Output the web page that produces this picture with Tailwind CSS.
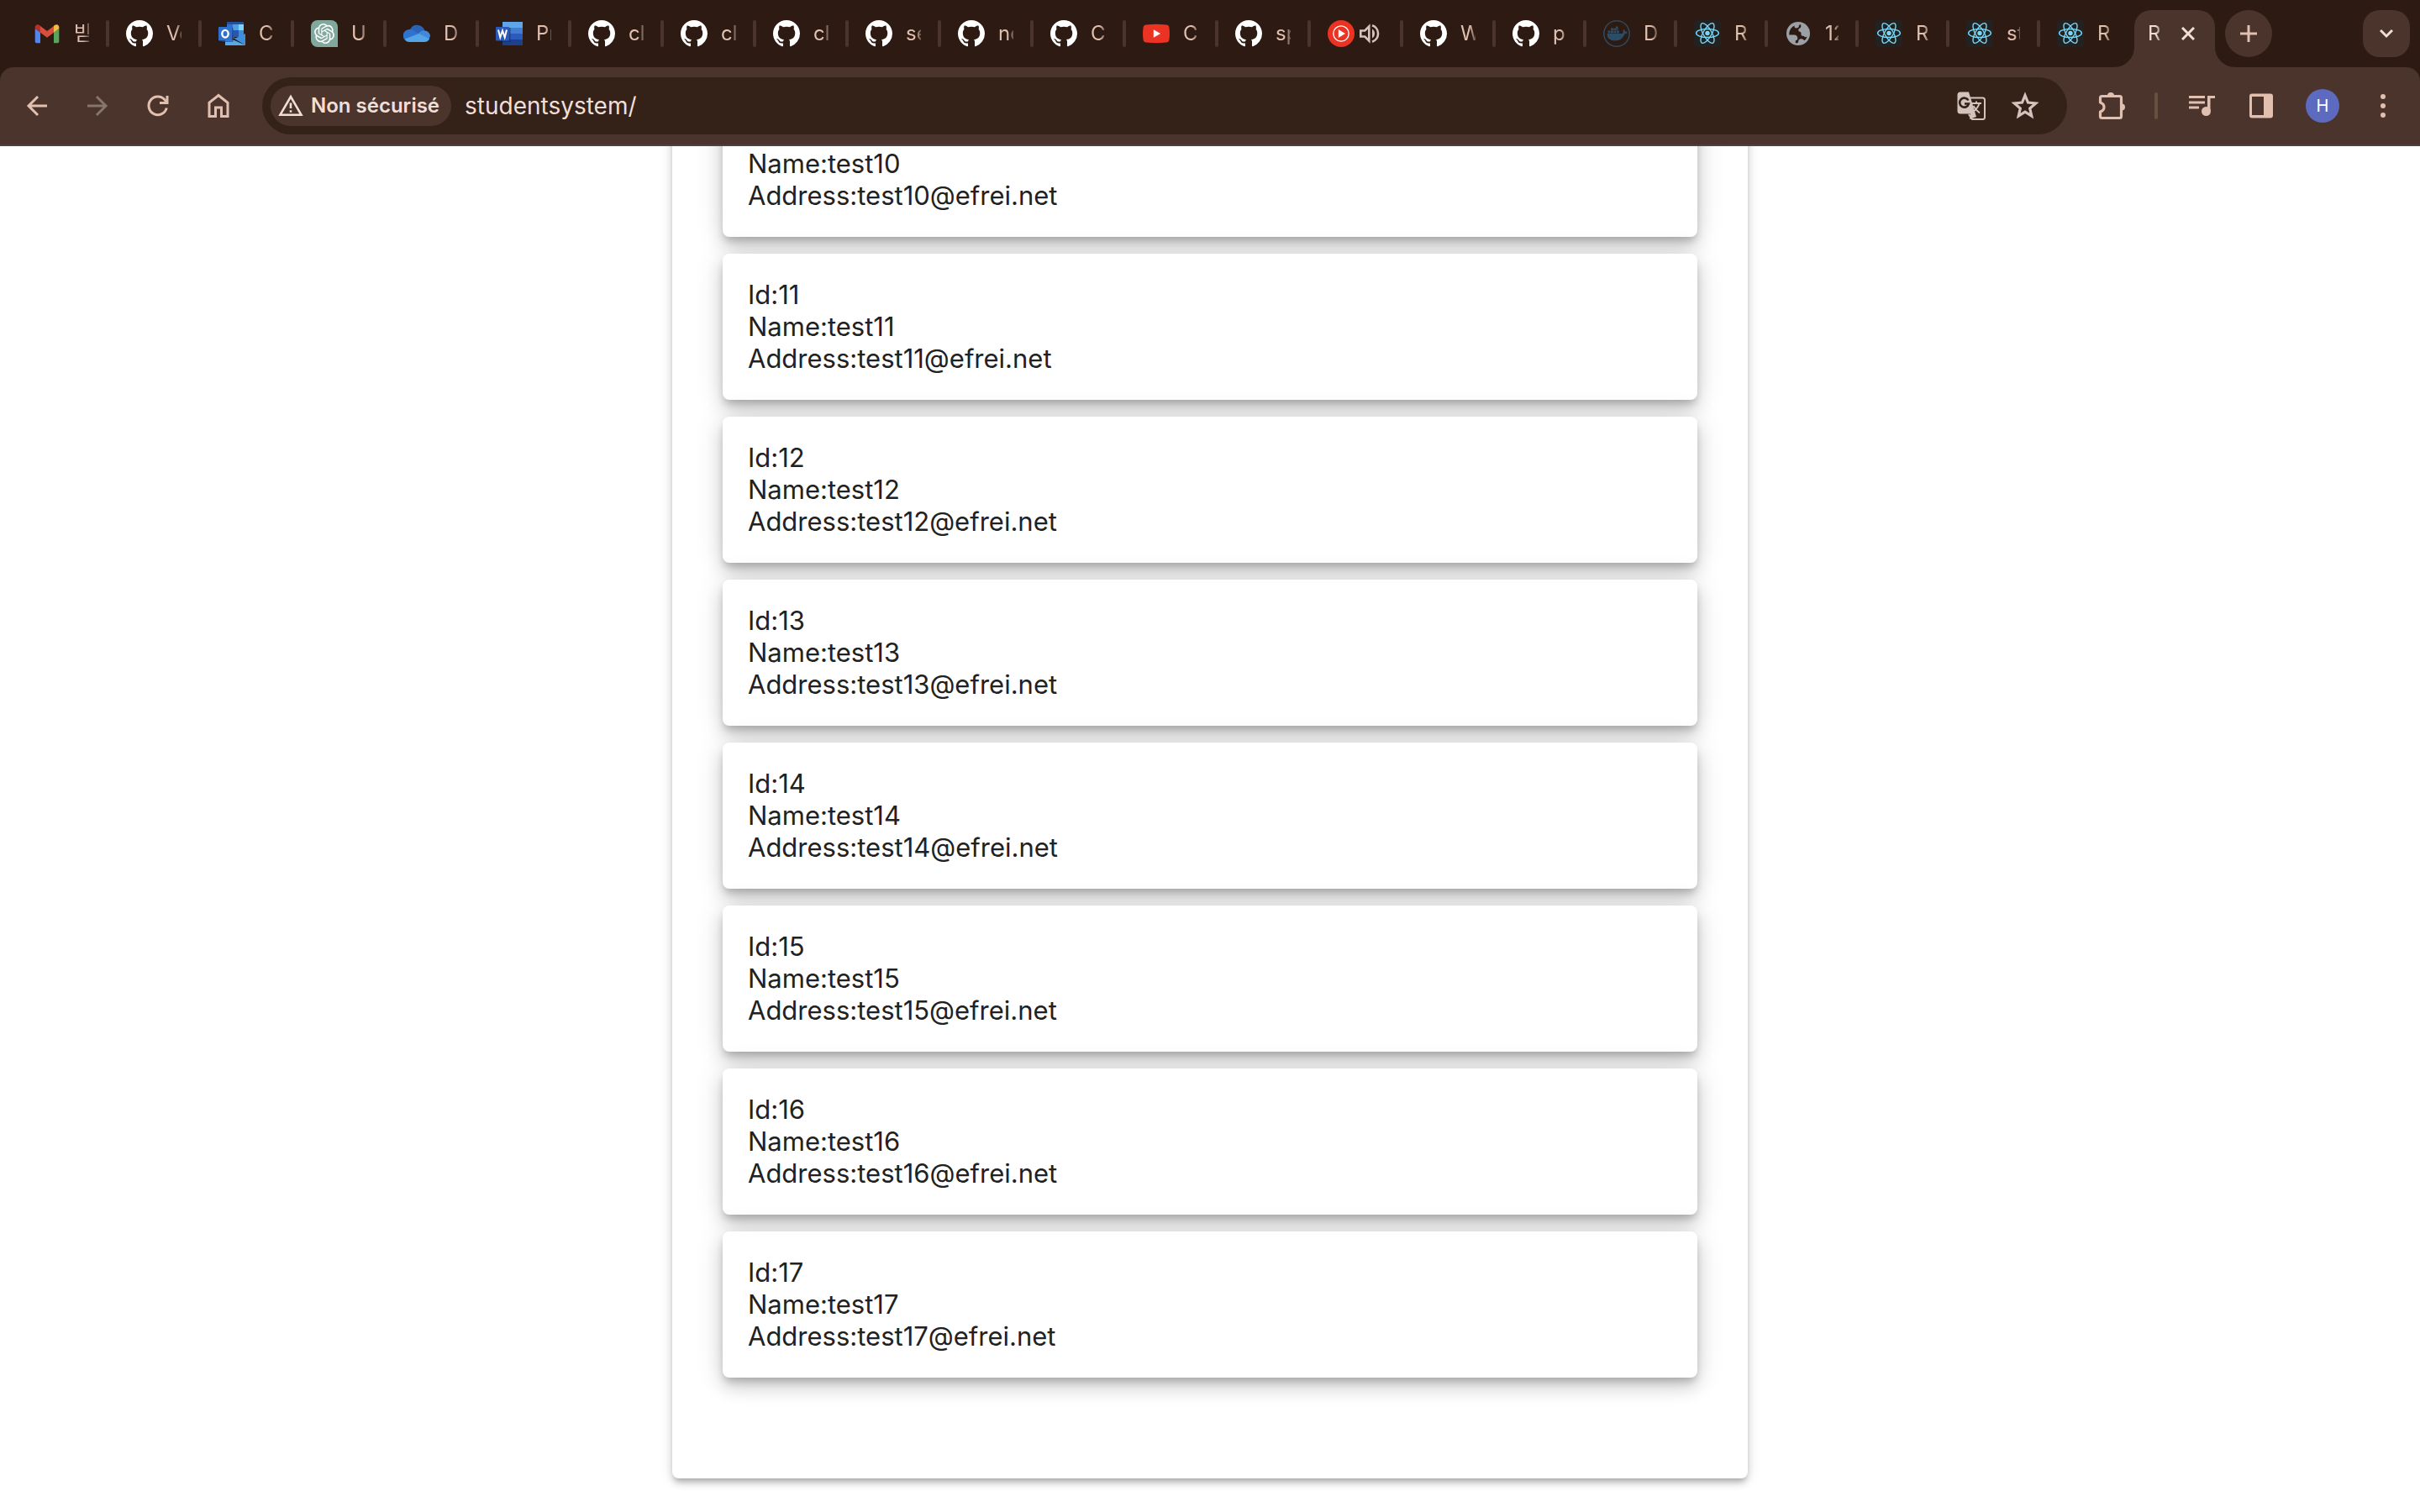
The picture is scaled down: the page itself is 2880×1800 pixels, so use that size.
<!DOCTYPE html>
<html lang="fr">
<head>
<meta charset="utf-8">
<title>React App</title>
<script src="https://cdn.jsdelivr.net/npm/@tailwindcss/browser@4"></script>
</head>
<body class="flex h-screen flex-col overflow-hidden bg-white font-['Inter','Noto_Sans_CJK_KR',sans-serif]">

<svg class="hidden" aria-hidden="true">
  <symbol id="github" viewBox="0 0 16 16"><path fill="#fff" d="M8 0C3.58 0 0 3.58 0 8c0 3.54 2.29 6.53 5.47 7.59.4.07.55-.17.55-.38 0-.19-.01-.82-.01-1.49-2.01.37-2.53-.49-2.69-.94-.09-.23-.48-.94-.82-1.13-.28-.15-.68-.52-.01-.53.63-.01 1.08.58 1.23.82.72 1.21 1.87.87 2.33.66.07-.52.28-.87.51-1.07-1.78-.2-3.64-.89-3.64-3.95 0-.87.31-1.59.82-2.15-.08-.2-.36-1.02.08-2.12 0 0 .67-.21 2.2.82.64-.18 1.32-.27 2-.27.68 0 1.36.09 2 .27 1.53-1.04 2.2-.82 2.2-.82.44 1.1.16 1.92.08 2.12.51.56.82 1.27.82 2.15 0 3.07-1.87 3.75-3.65 3.95.29.25.54.73.54 1.48 0 1.07-.01 1.93-.01 2.2 0 .21.15.46.55.38A8.013 8.013 0 0016 8c0-4.42-3.58-8-8-8z"/></symbol>
  <symbol id="react" viewBox="0 0 32 32"><rect width="32" height="32" rx="3" fill="#222222"/><g fill="none" stroke="#7ad7f5" stroke-width="1.400"><ellipse cx="16" cy="15.500" rx="13.400" ry="5"/><ellipse cx="16" cy="15.500" rx="13.400" ry="5" transform="rotate(60 16 15.500)"/><ellipse cx="16" cy="15.500" rx="13.400" ry="5" transform="rotate(120 16 15.500)"/></g><circle cx="16" cy="15.500" r="2.700" fill="#7ad7f5"/></symbol>
</svg>

<header class="shrink-0 bg-[#2d1b13]">
  <div class="flex h-20 pl-5 pr-3 text-2xl leading-8 text-[#e2c0b0]" role="tablist">
    <button role="tab" aria-label="Gmail" class="flex w-[110px] min-w-0 items-center gap-4 pl-5">
      <svg class="size-8 shrink-0" viewBox="0 0 32 32"><path fill="#5286ec" d="M1.700 10v15.500q0 1.700 1.700 1.700H8V14.500z"/><path fill="#58a55c" d="M30.300 10v15.500q0 1.700-1.700 1.700H24V14.500z"/><path fill="#d94f3d" d="M8 14.700V7l8 6 8-6v7.700l-8 6z"/><path fill="#b5322a" d="M1.700 10V8.500C1.700 5.500 4.500 4.200 7 6l1 .8v7.900z"/><path fill="#f2bd42" d="M30.300 10V8.500c0-3-2.800-4.300-5.300-2.500l-1 .8v7.900z"/></svg>
      <span class="w-[18px] shrink-0 overflow-hidden whitespace-nowrap text-left mask-r-from-60% mask-r-to-120%">받</span>
      <i class="ml-auto h-8 w-1 rounded-sm bg-[#4b342b]"></i>
    </button>
    <button role="tab" aria-label="GitHub V" class="flex w-[110px] min-w-0 items-center gap-4 pl-5">
      <svg class="size-8 shrink-0"><use href="#github"/></svg>
      <span class="w-[18px] shrink-0 overflow-hidden whitespace-nowrap text-left mask-r-from-60% mask-r-to-120%">Ve</span>
      <i class="ml-auto h-8 w-1 rounded-sm bg-[#4b342b]"></i>
    </button>
    <button role="tab" aria-label="Outlook" class="flex w-[110px] min-w-0 items-center gap-4 pl-5">
      <svg class="size-8 shrink-0" viewBox="0 0 32 32"><path fill="#234f9b" d="M10 2h20v4H10z"/><path fill="#2f6fd0" d="M10 5h7v14h-7z"/><path fill="#4da0e0" d="M17 5h7v7h-7z"/><path fill="#79d5fb" d="M24 5h6v7h-6z"/><path fill="#2757b0" d="M17 12h7v8h-7z"/><path fill="#3f8cdb" d="M24 12h6v8h-6z"/><path fill="#2c62b4" d="M8 16v6h14z"/><path fill="#55a8e8" d="M8 20l24 10H8z"/><path fill="#3f90dc" d="M32 16v14L19 22z"/><path fill="#57aaea" d="M8 30V21l11 3 13 6z"/><path fill="#1d3f78" fill-opacity=".6" d="M16 9h1.500v17H4v-1.500h12z"/><rect y="8" width="16" height="16.500" rx="1" fill="#2f6fce"/><ellipse cx="8" cy="16.200" rx="3.700" ry="4.300" fill="none" stroke="#fff" stroke-width="2.400"/></svg>
      <span class="w-[18px] shrink-0 overflow-hidden whitespace-nowrap text-left mask-r-from-60% mask-r-to-120%">C</span>
      <i class="ml-auto h-8 w-1 rounded-sm bg-[#4b342b]"></i>
    </button>
    <button role="tab" aria-label="ChatGPT" class="flex w-[110px] min-w-0 items-center gap-4 pl-5">
      <svg class="size-8 shrink-0" viewBox="0 0 32 32"><path fill="#80a89d" d="M8 0h16a8 8 0 018 8v24H8a8 8 0 01-8-8V8a8 8 0 018-8z"/><path transform="translate(4 4)" fill="#fff" d="M22.2819 9.8211a5.9847 5.9847 0 0 0-.5157-4.9108 6.0462 6.0462 0 0 0-6.5098-2.9A6.0651 6.0651 0 0 0 4.9807 4.1818a5.9847 5.9847 0 0 0-3.9977 2.9 6.0462 6.0462 0 0 0 .7427 7.0966 5.98 5.98 0 0 0 .511 4.9107 6.051 6.051 0 0 0 6.5146 2.9001A5.9847 5.9847 0 0 0 13.2599 24a6.0557 6.0557 0 0 0 5.7718-4.2058 5.9894 5.9894 0 0 0 3.9977-2.9001 6.0557 6.0557 0 0 0-.7475-7.0729zm-9.022 12.6081a4.4755 4.4755 0 0 1-2.8764-1.0408l.1419-.0804 4.7783-2.7582a.7948.7948 0 0 0 .3927-.6813v-6.7369l2.02 1.1686a.071.071 0 0 1 .038.052v5.5826a4.504 4.504 0 0 1-4.4945 4.4944zm-9.6607-4.1254a4.4708 4.4708 0 0 1-.5346-3.0137l.142.0852 4.783 2.7582a.7712.7712 0 0 0 .7806 0l5.8428-3.3685v2.3324a.0804.0804 0 0 1-.0332.0615L9.74 19.9502a4.4992 4.4992 0 0 1-6.1408-1.6464zM2.3408 7.8956a4.485 4.485 0 0 1 2.3655-1.9728V11.6a.7664.7664 0 0 0 .3879.6765l5.8144 3.3543-2.0201 1.1685a.0757.0757 0 0 1-.071 0l-4.8303-2.7865A4.504 4.504 0 0 1 2.3408 7.872zm16.5963 3.8558L13.1038 8.364 15.1192 7.2a.0757.0757 0 0 1 .071 0l4.8303 2.7913a4.4944 4.4944 0 0 1-.6765 8.1042v-5.6772a.79.79 0 0 0-.407-.667zm2.0107-3.0231l-.142-.0852-4.7735-2.7818a.7759.7759 0 0 0-.7854 0L9.409 9.2297V6.8974a.0662.0662 0 0 1 .0284-.0615l4.8303-2.7866a4.4992 4.4992 0 0 1 6.6802 4.66zM8.3065 12.863l-2.02-1.1638a.0804.0804 0 0 1-.038-.0567V6.0742a4.4992 4.4992 0 0 1 7.3757-3.4537l-.142.0805L8.704 5.459a.7948.7948 0 0 0-.3927.6813zm1.0976-2.3654l2.602-1.4998 2.6069 1.4998v2.9994l-2.5974 1.4997-2.6067-1.4997Z"/></svg>
      <span class="w-[18px] shrink-0 overflow-hidden whitespace-nowrap text-left mask-r-from-60% mask-r-to-120%">U</span>
      <i class="ml-auto h-8 w-1 rounded-sm bg-[#4b342b]"></i>
    </button>
    <button role="tab" aria-label="OneDrive" class="flex w-[110px] min-w-0 items-center gap-4 pl-5">
      <svg class="size-8 shrink-0" viewBox="0 0 32 32"><path fill="#2a63b5" d="M8 11a9.500 9.500 0 0117.500 1.500L19 18 8 14z"/><path fill="#2f73cf" d="M7.500 26A7.500 7.500 0 117 11q3-.3 6 1.500l8 5L4 25z"/><path fill="#4089d8" d="M18 16q3-4 7.500-3.600A7 7 0 0132 19l-2 5-12-7z"/><path fill="#54a5e8" d="M1.700 22.500L18.500 16 31 22.300Q29.500 26 25.500 26h-18q-3.700 0-5.800-3.500z"/></svg>
      <span class="w-[18px] shrink-0 overflow-hidden whitespace-nowrap text-left mask-r-from-60% mask-r-to-120%">D</span>
      <i class="ml-auto h-8 w-1 rounded-sm bg-[#4b342b]"></i>
    </button>
    <button role="tab" aria-label="Word" class="flex w-[110px] min-w-0 items-center gap-4 pl-5">
      <svg class="size-8 shrink-0" viewBox="0 0 32 32"><path fill="#5fa5ea" d="M8 2h24v7H8z"/><path fill="#437dd1" d="M8 9h24v7H8z"/><path fill="#2d5bbb" d="M8 16h24v7H8z"/><path fill="#1e3f8b" d="M8 23h24v7H8z"/><path fill="#122c66" fill-opacity=".6" d="M16 9h1.500v17H8v-1.500h8z"/><rect y="8" width="16" height="16.500" rx="1" fill="#2a59b8"/><path fill="none" stroke="#fff" stroke-width="2" d="M3 11.500l2.300 9L8 12.500l2.700 8 2.300-9"/></svg>
      <span class="w-[18px] shrink-0 overflow-hidden whitespace-nowrap text-left mask-r-from-60% mask-r-to-120%">Pr</span>
      <i class="ml-auto h-8 w-1 rounded-sm bg-[#4b342b]"></i>
    </button>
    <button role="tab" aria-label="GitHub cl" class="flex w-[110px] min-w-0 items-center gap-4 pl-5">
      <svg class="size-8 shrink-0"><use href="#github"/></svg>
      <span class="w-[18px] shrink-0 overflow-hidden whitespace-nowrap text-left mask-r-from-60% mask-r-to-120%">cl</span>
      <i class="ml-auto h-8 w-1 rounded-sm bg-[#4b342b]"></i>
    </button>
    <button role="tab" aria-label="GitHub cl" class="flex w-[110px] min-w-0 items-center gap-4 pl-5">
      <svg class="size-8 shrink-0"><use href="#github"/></svg>
      <span class="w-[18px] shrink-0 overflow-hidden whitespace-nowrap text-left mask-r-from-60% mask-r-to-120%">cl</span>
      <i class="ml-auto h-8 w-1 rounded-sm bg-[#4b342b]"></i>
    </button>
    <button role="tab" aria-label="GitHub cl" class="flex w-[110px] min-w-0 items-center gap-4 pl-5">
      <svg class="size-8 shrink-0"><use href="#github"/></svg>
      <span class="w-[18px] shrink-0 overflow-hidden whitespace-nowrap text-left mask-r-from-60% mask-r-to-120%">cl</span>
      <i class="ml-auto h-8 w-1 rounded-sm bg-[#4b342b]"></i>
    </button>
    <button role="tab" aria-label="GitHub se" class="flex w-[110px] min-w-0 items-center gap-4 pl-5">
      <svg class="size-8 shrink-0"><use href="#github"/></svg>
      <span class="w-[18px] shrink-0 overflow-hidden whitespace-nowrap text-left mask-r-from-60% mask-r-to-120%">se</span>
      <i class="ml-auto h-8 w-1 rounded-sm bg-[#4b342b]"></i>
    </button>
    <button role="tab" aria-label="GitHub ne" class="flex w-[110px] min-w-0 items-center gap-4 pl-5">
      <svg class="size-8 shrink-0"><use href="#github"/></svg>
      <span class="w-[18px] shrink-0 overflow-hidden whitespace-nowrap text-left mask-r-from-60% mask-r-to-120%">ne</span>
      <i class="ml-auto h-8 w-1 rounded-sm bg-[#4b342b]"></i>
    </button>
    <button role="tab" aria-label="GitHub C" class="flex w-[110px] min-w-0 items-center gap-4 pl-5">
      <svg class="size-8 shrink-0"><use href="#github"/></svg>
      <span class="w-[18px] shrink-0 overflow-hidden whitespace-nowrap text-left mask-r-from-60% mask-r-to-120%">C</span>
      <i class="ml-auto h-8 w-1 rounded-sm bg-[#4b342b]"></i>
    </button>
    <button role="tab" aria-label="YouTube" class="flex w-[110px] min-w-0 items-center gap-4 pl-5">
      <svg class="size-8 shrink-0" viewBox="0 0 32 32"><path fill="#ea3323" d="M4 5.400Q16 4.200 28 5.400q3 .2 3.400 3.100 1.100 7.500 0 15-.4 2.900-3.400 3.100-12 1.200-24 0-3-.2-3.400-3.100-1.100-7.500 0-15Q1 5.600 4 5.400z"/><path fill="#fff" d="M12.800 11.200v9.600l8.300-4.800z"/></svg>
      <span class="w-[18px] shrink-0 overflow-hidden whitespace-nowrap text-left mask-r-from-60% mask-r-to-120%">C</span>
      <i class="ml-auto h-8 w-1 rounded-sm bg-[#4b342b]"></i>
    </button>
    <button role="tab" aria-label="GitHub sp" class="flex w-[110px] min-w-0 items-center gap-4 pl-5">
      <svg class="size-8 shrink-0"><use href="#github"/></svg>
      <span class="w-[18px] shrink-0 overflow-hidden whitespace-nowrap text-left mask-r-from-60% mask-r-to-120%">sp</span>
      <i class="ml-auto h-8 w-1 rounded-sm bg-[#4b342b]"></i>
    </button>
    <button role="tab" aria-label="YouTube Music" class="flex w-[110px] min-w-0 items-center gap-1.5 pl-5">
      <svg class="size-8 shrink-0" viewBox="0 0 32 32"><circle cx="16" cy="16" r="16" fill="#ea3323"/><circle cx="16" cy="16" r="9.200" fill="none" stroke="#fff" stroke-width="1.300"/><path fill="#fff" d="M12.800 11v10l8.200-5z"/></svg>
      <svg class="size-6 shrink-0" viewBox="0 0 24 24" fill="none" stroke="#d3c3bd" stroke-width="2.600"><path d="M1.300 8.500h5l5-5v17l-5-5h-5z"/><path fill="#d3c3bd" stroke="none" d="M15 6.500a6.500 6.500 0 010 11z"/><path d="M15 2.300a10.200 10.200 0 010 19.400"/></svg>
      <i class="ml-auto h-8 w-1 rounded-sm bg-[#4b342b]"></i>
    </button>
    <button role="tab" aria-label="GitHub W" class="flex w-[110px] min-w-0 items-center gap-4 pl-5">
      <svg class="size-8 shrink-0"><use href="#github"/></svg>
      <span class="w-[18px] shrink-0 overflow-hidden whitespace-nowrap text-left mask-r-from-60% mask-r-to-120%">W</span>
      <i class="ml-auto h-8 w-1 rounded-sm bg-[#4b342b]"></i>
    </button>
    <button role="tab" aria-label="GitHub p" class="flex w-[108px] min-w-0 items-center gap-4 pl-5">
      <svg class="size-8 shrink-0"><use href="#github"/></svg>
      <span class="w-4 shrink-0 overflow-hidden whitespace-nowrap text-left mask-r-from-60% mask-r-to-120%">p</span>
      <i class="ml-auto h-8 w-1 rounded-sm bg-[#4b342b]"></i>
    </button>
    <button role="tab" aria-label="Docker" class="flex w-[108px] min-w-0 items-center gap-4 pl-5">
      <svg class="size-8 shrink-0" viewBox="0 0 32 32"><circle cx="16" cy="16" r="15.200" fill="none" stroke="#30485a" stroke-width="1.600"/><g fill="#2a4c65"><path d="M4.500 16h18q1.500-.4 1-2-.5-1.800 1-3.300 1.500 1 1.500 2.800 2 0 3 .8-.8 2-3.500 2.200Q22.500 24.500 14 24.500 4.500 24.500 4.500 16z"/><path d="M5.500 12.500h3v3h-3zM9 12.500h3v3H9zM12.500 12.500h3v3h-3zM16 12.500h3v3h-3zM9 9.500h3v2.600H9zM12.500 9.500h3v2.600h-3zM16 9.500h1.500v2.600H16zM15 7.500h2.500v2H15z"/></g></svg>
      <span class="w-4 shrink-0 overflow-hidden whitespace-nowrap text-left mask-r-from-60% mask-r-to-120%">D</span>
      <i class="ml-auto h-8 w-1 rounded-sm bg-[#4b342b]"></i>
    </button>
    <button role="tab" aria-label="React R" class="flex w-[108px] min-w-0 items-center gap-4 pl-5">
      <svg class="size-8 shrink-0"><use href="#react"/></svg>
      <span class="w-4 shrink-0 overflow-hidden whitespace-nowrap text-left mask-r-from-60% mask-r-to-120%">R</span>
      <i class="ml-auto h-8 w-1 rounded-sm bg-[#4b342b]"></i>
    </button>
    <button role="tab" aria-label="127" class="flex w-[108px] min-w-0 items-center gap-4 pl-5">
      <svg class="size-8 shrink-0" viewBox="0 0 32 32"><circle cx="16" cy="16" r="14" fill="#9aa0a6"/><path fill="#2d1b13" d="M19 5q1 3-1 4.500-2 .7-1.800 2.500.2 1.500 1.800 1.800 2 .7 1.500 2.500-.5 2 1.500 2.500 1.600-.3 2.500 1 1.500.8 3-.3-.5 2.500-2.500 4.500-2-.3-2.700-1.500-1.500-.5-2.800-.2-2 .7-2.200 2.200 0 1.500-1 2.700h-2.500v-3q2.700-.5 2.500-3-.5-3.500-4-3.700H5.200q-.2-5 3-8.500 1-1.200 3.300-2.500v1.300q0 1.700 2 1.700 3.500 0 3.500-3.500z"/></svg>
      <span class="w-4 shrink-0 overflow-hidden whitespace-nowrap text-left mask-r-from-60% mask-r-to-120%">12</span>
      <i class="ml-auto h-8 w-1 rounded-sm bg-[#4b342b]"></i>
    </button>
    <button role="tab" aria-label="React R" class="flex w-[108px] min-w-0 items-center gap-4 pl-5">
      <svg class="size-8 shrink-0"><use href="#react"/></svg>
      <span class="w-4 shrink-0 overflow-hidden whitespace-nowrap text-left mask-r-from-60% mask-r-to-120%">R</span>
      <i class="ml-auto h-8 w-1 rounded-sm bg-[#4b342b]"></i>
    </button>
    <button role="tab" aria-label="React st" class="flex w-[108px] min-w-0 items-center gap-4 pl-5">
      <svg class="size-8 shrink-0"><use href="#react"/></svg>
      <span class="w-4 shrink-0 overflow-hidden whitespace-nowrap text-left mask-r-from-60% mask-r-to-120%">st</span>
      <i class="ml-auto h-8 w-1 rounded-sm bg-[#4b342b]"></i>
    </button>
    <button role="tab" aria-label="React R" class="flex w-[108px] min-w-0 items-center gap-4 pl-5">
      <svg class="size-8 shrink-0"><use href="#react"/></svg>
      <span class="w-4 shrink-0 overflow-hidden whitespace-nowrap text-left mask-r-from-60% mask-r-to-120%">R</span>
    </button>
    <div role="tab" aria-selected="true" class="relative ml-1 mt-3 flex w-24 shrink-0 items-center justify-between rounded-t-[20px] bg-[#4b342b] pb-3 pl-4 pr-6 text-[#f1dfd7]">
      <svg class="absolute -left-6 bottom-0 size-6" viewBox="0 0 24 24"><path fill="#4b342b" d="M24 0v24H0A24 24 0 0024 0z"/></svg>
      <svg class="absolute -right-6 bottom-0 size-6" viewBox="0 0 24 24"><path fill="#4b342b" d="M0 0v24h24A24 24 0 010 0z"/></svg>
      <span class="w-4 overflow-hidden mask-r-from-60% mask-r-to-120%">R</span>
      <button aria-label="Fermer l'onglet"><svg class="size-4" viewBox="0 0 16 16"><path stroke="#f1dfd7" stroke-width="3" d="M1 1l14 14M15 1L1 15"/></svg></button>
    </div>
    <button aria-label="Nouvel onglet" class="ml-3 mt-3 flex size-14 shrink-0 items-center justify-center rounded-full bg-[#4b342b]"><svg class="size-5" viewBox="0 0 20 20"><path stroke="#e2c0b0" stroke-width="3" d="M10 0v20M0 10h20"/></svg></button>
    <button aria-label="Rechercher des onglets" class="ml-auto mt-3 flex size-14 shrink-0 items-center justify-center rounded-[20px] bg-[#4b342b]"><svg class="h-3 w-4" viewBox="0 0 16 12"><path fill="none" stroke="#f1dfd7" stroke-width="3" d="M1 2l7 7 7-7"/></svg></button>
  </div>

  <div class="flex h-[94px] items-center rounded-t-2xl border-b-2 border-[#4d403d] bg-[#4b342b] pl-7 pr-7">
    <div class="flex gap-10">
      <button aria-label="Retour" class="size-8"><svg class="size-8" viewBox="0 0 32 32" fill="none" stroke="#e2c0b0" stroke-width="3"><path d="M28 16H6M17 5L6 16l11 11"/></svg></button>
      <button aria-label="Avancer" class="size-8"><svg class="size-8" viewBox="0 0 32 32" fill="none" stroke="#87746b" stroke-width="3"><path d="M4 16h22M15 5l11 11-11 11"/></svg></button>
      <button aria-label="Actualiser" class="size-8"><svg class="size-8" viewBox="0 0 32 32" fill="none" stroke="#e2c0b0" stroke-width="3"><path d="M26.300 18.500A10.800 10.800 0 1124 8.800l3 3"/><path d="M27 4v8.500h-9"/></svg></button>
      <button aria-label="Accueil" class="size-8"><svg class="size-8" viewBox="0 0 32 32" fill="none" stroke="#e2c0b0" stroke-width="3"><path d="M5 28.500V12.300L16 3.500l11 8.800v16.200h-7.500V18h-7v10.500z"/></svg></button>
    </div>
    <div class="ml-9 flex h-[68px] flex-1 items-center rounded-full bg-[#342219] pl-2.5 pr-8">
      <button class="flex h-12 shrink-0 items-center gap-2 rounded-full bg-[#4b342b] pl-2 pr-3.5 text-2xl font-semibold text-[#f1dfd7]">
        <svg class="size-8" viewBox="0 0 32 32"><path fill="none" stroke="#f1dfd7" stroke-width="2.600" d="M3.500 26.700L16 5l12.500 21.700z"/><path stroke="#f1dfd7" stroke-width="2.600" d="M16 12.500v6.500M16 21.200v2.600"/></svg>
        Non sécurisé
      </button>
      <input aria-label="Adresse" class="ml-4 min-w-0 flex-1 bg-transparent text-[28px] text-[#f1dfd7]" value="studentsystem/">
      <button aria-label="Traduire cette page" class="size-9"><svg class="size-9" viewBox="0 0 36 36"><path fill="#d3c3bd" d="M5 1.500h10L24 31 16 34l1-6.500H5Q1.500 27.500 1.500 24V5Q1.500 1.500 5 1.500z"/><path fill="none" stroke="#d3c3bd" stroke-width="2" d="M17 8.500h14.500q2.500 0 2.500 2.500v20.500Q34 34 31.500 34H19l-4-6"/><path fill="none" stroke="#342219" stroke-width="2.600" d="M14.500 11.500a5.500 5.500 0 10.500 4h-5"/><path fill="none" stroke="#d3c3bd" stroke-width="1.900" d="M18 15h12M24 12.500V15M27.500 15q-1.500 6-7.500 10M20.500 18q2.500 5 7.500 8.500"/></svg></button>
      <button aria-label="Ajouter aux favoris" class="ml-7 size-9"><svg class="size-9" viewBox="0 0 36 36"><path fill="none" stroke="#d3c3bd" stroke-width="3.200" d="M18 5.500l3.500 8.600 9.200.8-7 6.100 2.100 9.100-7.800-4.900-7.800 4.900L12.300 21l-7-6.100 9.200-.8z"/></svg></button>
    </div>
    <button aria-label="Extensions" class="ml-9 size-9"><svg class="size-9" viewBox="0 0 36 36"><path fill="none" stroke="#e2c0b0" stroke-width="3.200" stroke-linejoin="round" d="M3.500 8.500q0-2 2-2h21q2 0 2 2v22q0 2-2 2h-21q-2 0-2-2V25Q8 23.500 8 19.500T3.500 14z"/><path fill="#e2c0b0" d="M12 6a4 4 0 018 0zM29 15.500a4 4 0 010 8z"/></svg></button>
    <i class="ml-8 h-8 w-1 rounded-sm bg-[#66503f]"></i>
    <button aria-label="Contrôle média" class="ml-9 size-8"><svg class="size-8" viewBox="0 0 32 32" fill="#e2c0b0"><path d="M1 4h19v3H1zM1 10.500h19v3H1zM1 16.500h12v3H1zM23 4h9v3h-5.500v15.500H23z"/><circle cx="21.500" cy="22.500" r="5.500"/></svg></button>
    <button aria-label="Panneau latéral" class="ml-10 size-8"><svg class="size-8" viewBox="0 0 32 32"><path fill="#e2c0b0" fill-rule="evenodd" d="M4 1.500h22q3 0 3 3v23q0 3-3 3H4q-3 0-3-3v-23q0-3 3-3zM4 5v22h14V5z"/></svg></button>
    <button aria-label="Profil" class="ml-9 size-10 rounded-full bg-[#5c6bc0] text-xl text-white">H</button>
    <button aria-label="Menu" class="ml-9 size-8"><svg class="size-8" viewBox="0 0 32 32" fill="#e2c0b0"><circle cx="16" cy="5" r="3"/><circle cx="16" cy="16" r="3"/><circle cx="16" cy="27" r="3"/></svg></button>
  </div>
</header>

<main class="flex min-h-0 flex-1 flex-col items-center justify-end overflow-hidden pb-10 text-[31px] leading-[38px] text-[#212121]">
  <section class="flex w-full max-w-[1280px] flex-col gap-5 rounded-lg bg-white px-15 pb-30 pt-8 shadow-[0_6px_6px_-4px_rgba(0,0,0,0.2),0_6px_8px_0_rgba(0,0,0,0.14),0_2px_16px_0_rgba(0,0,0,0.12)]">
    <article class="rounded-lg bg-white px-[30px] pb-[30px] pt-17 shadow-[0_6px_10px_-2px_rgba(0,0,0,0.2),0_12px_20px_0_rgba(0,0,0,0.14),0_2px_36px_0_rgba(0,0,0,0.12)]"><p>Name:test10</p><p>Address:test10@efrei.net</p></article>
    <article class="rounded-lg bg-white p-[30px] shadow-[0_6px_10px_-2px_rgba(0,0,0,0.2),0_12px_20px_0_rgba(0,0,0,0.14),0_2px_36px_0_rgba(0,0,0,0.12)]"><p>Id:11</p><p>Name:test11</p><p>Address:test11@efrei.net</p></article>
    <article class="rounded-lg bg-white p-[30px] shadow-[0_6px_10px_-2px_rgba(0,0,0,0.2),0_12px_20px_0_rgba(0,0,0,0.14),0_2px_36px_0_rgba(0,0,0,0.12)]"><p>Id:12</p><p>Name:test12</p><p>Address:test12@efrei.net</p></article>
    <article class="rounded-lg bg-white p-[30px] shadow-[0_6px_10px_-2px_rgba(0,0,0,0.2),0_12px_20px_0_rgba(0,0,0,0.14),0_2px_36px_0_rgba(0,0,0,0.12)]"><p>Id:13</p><p>Name:test13</p><p>Address:test13@efrei.net</p></article>
    <article class="rounded-lg bg-white p-[30px] shadow-[0_6px_10px_-2px_rgba(0,0,0,0.2),0_12px_20px_0_rgba(0,0,0,0.14),0_2px_36px_0_rgba(0,0,0,0.12)]"><p>Id:14</p><p>Name:test14</p><p>Address:test14@efrei.net</p></article>
    <article class="rounded-lg bg-white p-[30px] shadow-[0_6px_10px_-2px_rgba(0,0,0,0.2),0_12px_20px_0_rgba(0,0,0,0.14),0_2px_36px_0_rgba(0,0,0,0.12)]"><p>Id:15</p><p>Name:test15</p><p>Address:test15@efrei.net</p></article>
    <article class="rounded-lg bg-white p-[30px] shadow-[0_6px_10px_-2px_rgba(0,0,0,0.2),0_12px_20px_0_rgba(0,0,0,0.14),0_2px_36px_0_rgba(0,0,0,0.12)]"><p>Id:16</p><p>Name:test16</p><p>Address:test16@efrei.net</p></article>
    <article class="rounded-lg bg-white p-[30px] shadow-[0_6px_10px_-2px_rgba(0,0,0,0.2),0_12px_20px_0_rgba(0,0,0,0.14),0_2px_36px_0_rgba(0,0,0,0.12)]"><p>Id:17</p><p>Name:test17</p><p>Address:test17@efrei.net</p></article>
  </section>
</main>
</body>
</html>
